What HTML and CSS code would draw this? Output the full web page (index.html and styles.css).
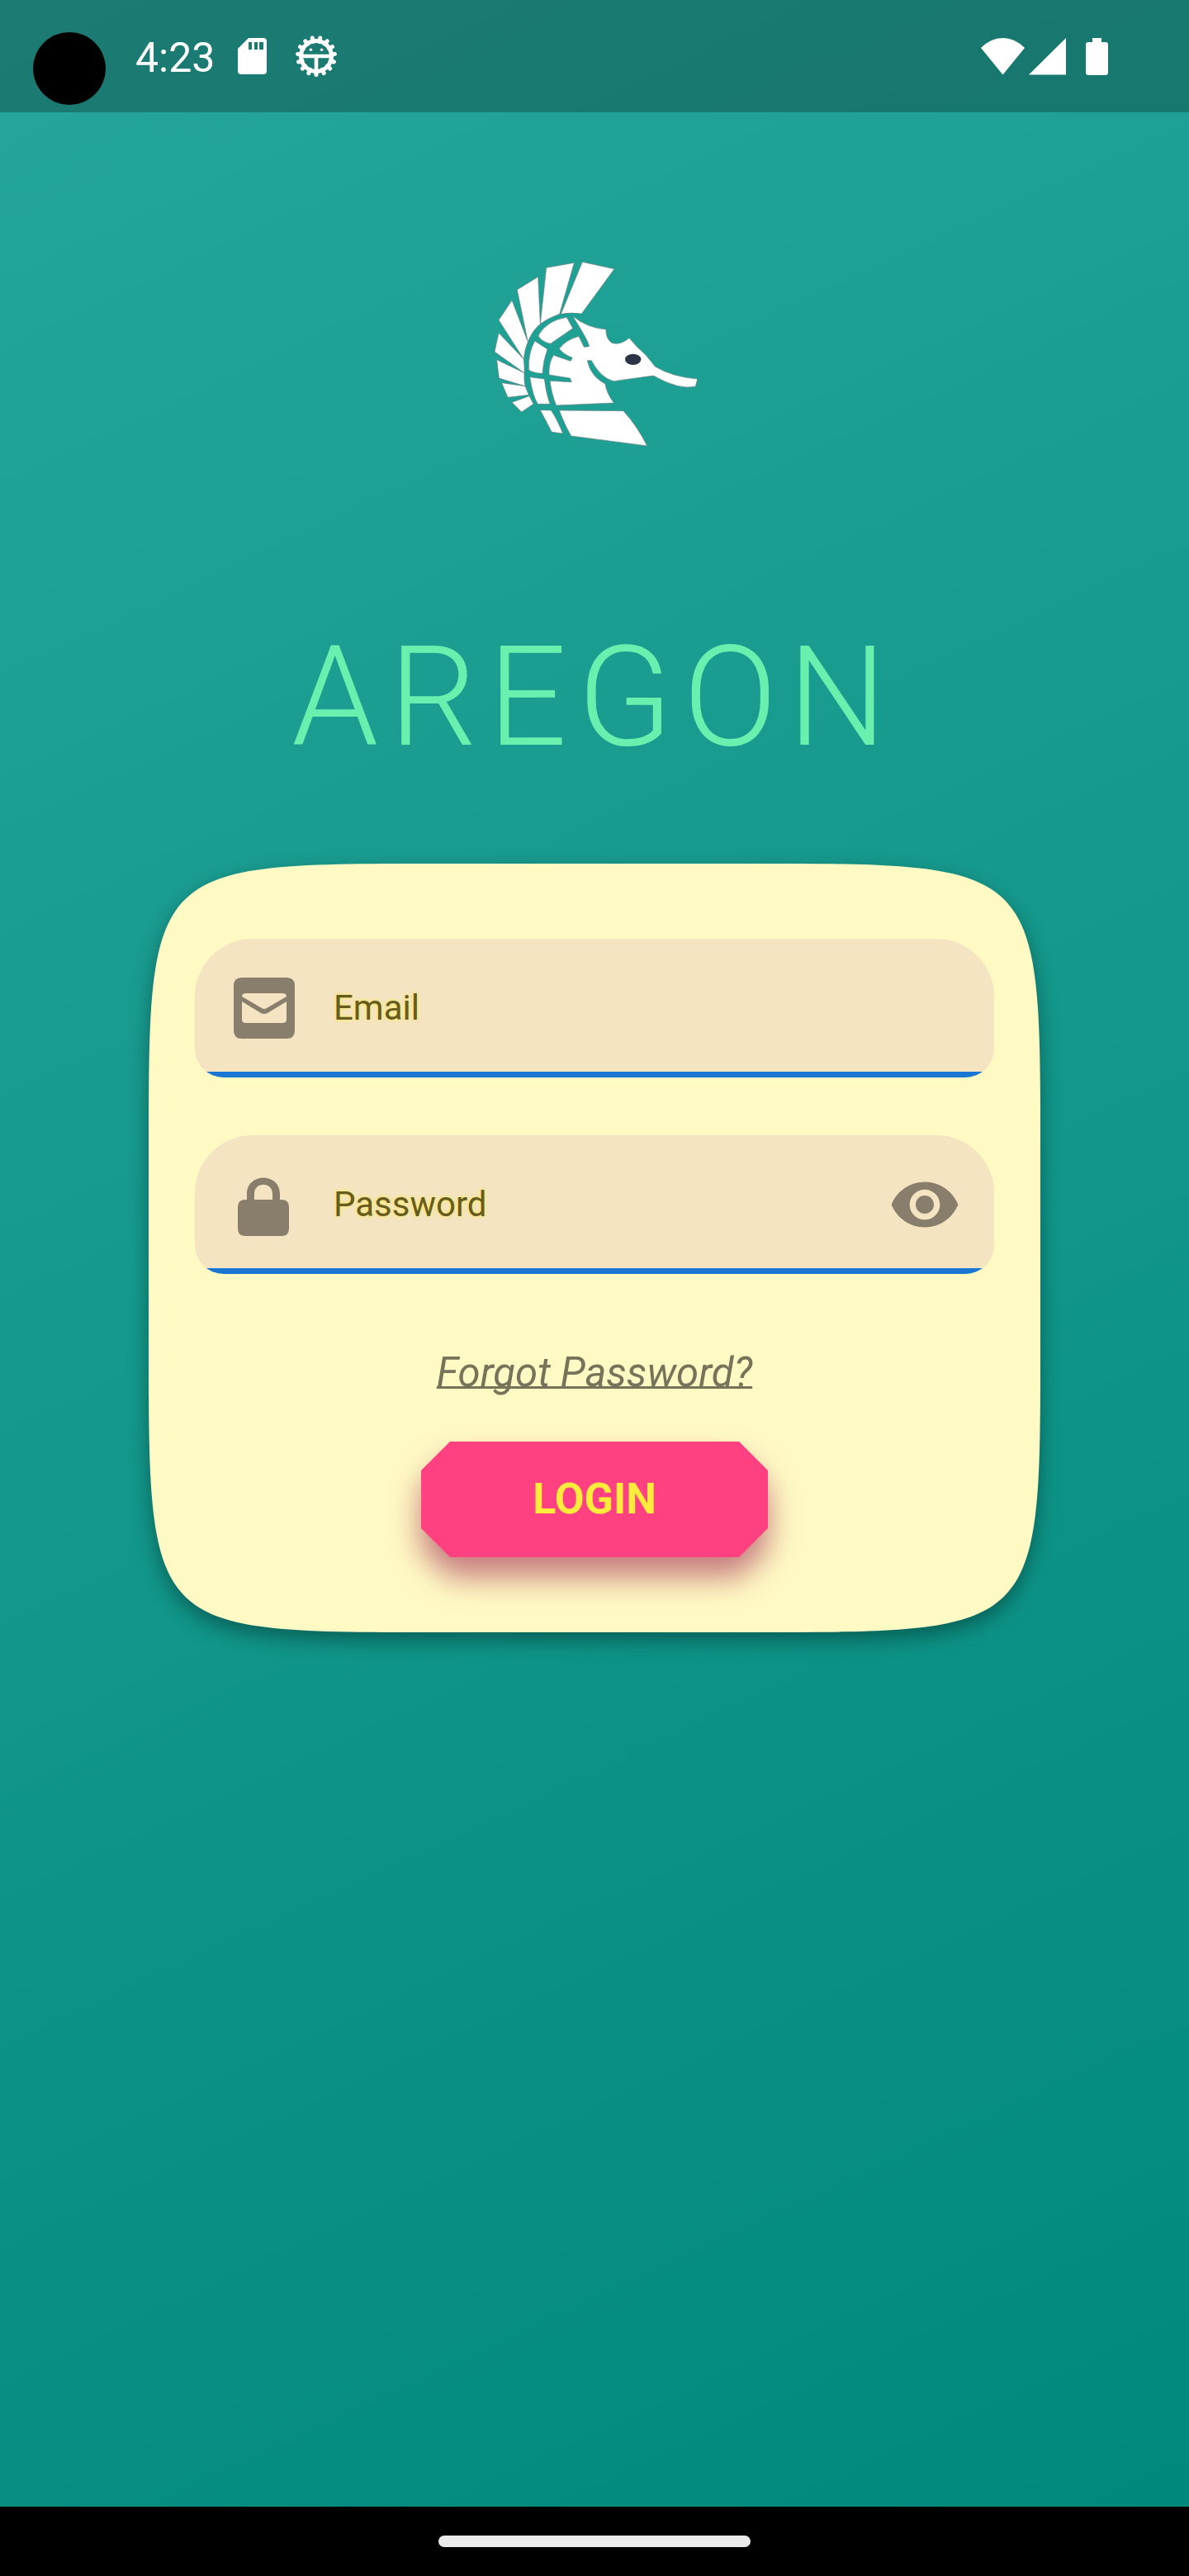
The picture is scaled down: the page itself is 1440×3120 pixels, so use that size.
FILE: index.html
```html
<!DOCTYPE html>
<html lang="en">
<head>
<meta charset="utf-8">
<meta name="viewport" content="width=device-width, initial-scale=1">
<title>Aregon</title>
<link rel="stylesheet" href="styles.css">
</head>
<body>
<div class="app">
  <header class="status">
    <span class="camera"></span>
    <span class="time">4:23</span>
    <svg class="sd" viewBox="0 0 35 45" aria-hidden="true"><path fill-rule="evenodd" d="M13 0H31Q35 0 35 4V40Q35 44 31 44H4Q0 44 0 40V13ZM13 5V14H17V5ZM20 5V14H24V5ZM26 5V14H31V5Z"/></svg>
    <svg class="bug" viewBox="-25 -25 50 50" aria-hidden="true">
      <circle r="18.5" class="line"/>
      <path class="line" d="M0 18V22.5M7.3 16.4L9.2 20.6M13.4 12L16.7 15.1M17.1 5.6L21.4 7M17.9-1.9L22.4-2.4M15.6-9L19.5-11.3M10.6-14.6L13.2-18.2M3.7-17.6L4.7-22M-7.3 16.4L-9.2 20.6M-13.4 12L-16.7 15.1M-17.1 5.6L-21.4 7M-17.9-1.9L-22.4-2.4M-15.6-9L-19.5-11.3M-10.6-14.6L-13.2-18.2M-3.7-17.6L-4.7-22"/>
      <path d="M-18-2.3H18V2.3H2.3V18H-2.3V2.3H-18Z"/>
      <circle cx="-6.6" cy="-7.7" r="1.8"/><circle cx="6.6" cy="-7.7" r="1.8"/>
    </svg>
    <span class="signals">
      <svg class="wifi" viewBox="0 0 53 45" aria-hidden="true"><path d="M0 12Q12 0 26.5 0T53 12L26.5 44.500Z"/></svg>
      <svg class="cell" viewBox="0 0 45 45" aria-hidden="true"><path d="M45 0V44.500H0Z"/></svg>
      <svg class="battery" viewBox="0 0 27 45" aria-hidden="true"><path d="M8 0H19V5H24Q27 5 27 8V42Q27 45 24 45H3Q0 45 0 42V8Q0 5 3 5H8Z"/></svg>
    </span>
  </header>
  <main class="screen">
    <svg class="logo" viewBox="-15 0 810 750" role="img" aria-label="Aregon logo">
      <g class="plates">
        <path d="M346 52L462 77L343 240Q305 234 268 241Z"/>
        <path d="M215 73L316 55L263 241Q222 256 193 277Z"/>
        <path d="M109 153L185 106L193 277Q165 300 148 342Z"/>
        <path d="M42 263L90 191L148 342Q136 370 133 405Z"/>
        <path d="M42 310L133 405Q136 430 135 455L27 378Z"/>
        <path d="M35 407L135 455Q133 480 138 503L43 474Z"/>
        <path d="M53 491L138 503L151 535L75 544Z"/>
        <path d="M90 562L153 539L168 568L125 597Z"/>
        <path d="M187 317Q219 264 289 253L311 293L230 349Q200 342 187 323Z"/>
        <path d="M173 339L219 369Q204 409 201 457Q168 456 151 444Q148 385 173 339Z"/>
        <path d="M155 470L208 477Q213 525 228 568H184Q166 540 155 470Z"/>
        <path d="M193 590L232 591Q251 617 275 675L235 670Z"/>
        <path d="M262 591L495 593Q545 648 581 720L305 684Q282 645 262 591Z"/>
        <path d="M311 249Q364 292 432 297Q430 330 453 346Q485 356 516 328Q542 361 574 388Q596 413 610 432Q675 470 764 477L757 504Q700 519 604 465L460 485Q412 473 379 410H364Q375 466 429 495Q432 525 460 564L251 573Q235 535 228 484L307 488L301 474L225 462Q223 419 241 391L303 412L310 400Q275 387 262 367Q285 335 333 322L352 361L370 359Q372 345 311 249Z"/>
      </g>
      <ellipse class="eye-dot" cx="530" cy="406" rx="29" ry="20"/>
    </svg>
    <h1 class="title">AREGON</h1>
    <form class="card">
      <svg class="card-shape" viewBox="0 0 1080 931" preserveAspectRatio="none" aria-hidden="true"><path d="M0 350C0 0 0 0 350 0H730C1080 0 1080 0 1080 350V581C1080 931 1080 931 730 931H350C0 931 0 931 0 581Z"/></svg>
      <div class="card-body">
        <label class="field">
          <svg class="icon" viewBox="0 0 88 88" aria-hidden="true"><path fill-rule="evenodd" d="M17 7H71Q81 7 81 17V71Q81 81 71 81H17Q7 81 7 71V17Q7 7 17 7ZM22 26Q17 26 17 30L41 44Q44 46 47 44L71 30Q71 26 66 26ZM17 36V58Q17 62 22 62H66Q71 62 71 58V36L48 50Q44 52 40 50Z"/></svg>
          <input type="email" placeholder="Email" aria-label="Email">
        </label>
        <div class="field">
          <svg class="icon" viewBox="0 0 88 88" aria-hidden="true"><path fill-rule="evenodd" d="M23 38V31C23 5 63 5 63 31V38H65Q74 38 74 47V73Q74 82 65 82H21Q12 82 12 73V47Q12 38 21 38ZM32 38H54V31C54 16 32 16 32 31Z"/></svg>
          <input type="password" placeholder="Password" aria-label="Password">
          <button class="reveal" type="button" aria-label="Show password"><svg class="icon" viewBox="0 0 24 24" aria-hidden="true"><path d="M12 4.500C7 4.500 2.730 7.610 1 12c1.730 4.390 6 7.500 11 7.500s9.270-3.110 11-7.500c-1.730-4.390-6-7.500-11-7.500zM12 17c-2.760 0-5-2.240-5-5s2.240-5 5-5 5 2.240 5 5-2.240 5-5 5zm0-8c-1.660 0-3 1.340-3 3s1.340 3 3 3 3-1.340 3-3-1.340-3-3-3z"/></svg></button>
        </div>
        <a class="forgot" href="#forgot">Forgot Password?</a>
        <div class="login-shadow"><button class="login" type="submit">LOGIN</button></div>
      </div>
    </form>
  </main>
</div>
<footer class="nav"><span class="pill"></span></footer>
</body>
</html>
```
FILE: styles.css
```css
* { box-sizing: border-box; }

body {
  margin: 0;
  min-height: 100vh;
  display: flex;
  flex-direction: column;
  font-family: Roboto, "Liberation Sans", sans-serif;
}

.app {
  flex: 1;
  display: flex;
  flex-direction: column;
  background: linear-gradient(155deg, #26a69a, #00897b);
}

/* System status bar */
.status {
  display: flex;
  align-items: center;
  height: 136px;
  padding: 0 98px 0 40px;
  background: rgba(0, 0, 0, 0.25);
  color: #fff;
  fill: #fff;
}

.camera {
  width: 88px;
  height: 88px;
  margin: 30px 36px 0 0;
  border-radius: 50%;
  background: #000;
}

.time {
  padding-top: 4px;
  margin-right: 28px;
  font-size: 50px;
  line-height: 56px;
}

.sd { width: 35px; height: 45px; margin-right: 35px; }
.bug { width: 50px; height: 50px; }
.line { fill: none; stroke: #fff; stroke-width: 5px; stroke-linecap: round; }

.signals { display: flex; margin-left: auto; }
.wifi { width: 53px; height: 45px; margin-right: 5px; }
.cell { width: 45px; height: 45px; margin-right: 24px; }
.battery { width: 27px; height: 45px; }

/* Login screen */
.screen {
  display: flex;
  flex-direction: column;
  align-items: center;
  padding: 164px 0;
}

.logo { width: 270px; height: 250px; }
.plates { fill: #fff; stroke: #6f7f83; stroke-width: 2px; }
.eye-dot { fill: #2c3547; }

.title {
  margin: 197px 0 103px;
  font-size: 168px;
  font-weight: 300;
  line-height: 196px;
  letter-spacing: 13px;
  color: #69f0ae;
}

.card {
  display: grid;
  width: 75%;
}

.card-shape,
.card-body { grid-area: 1 / 1; min-width: 0; }

.card-shape {
  width: 100%;
  height: 100%;
  min-height: 0;
  overflow: visible;
  fill: #fff9c4;
  filter: drop-shadow(0 10px 12px rgba(0, 0, 0, 0.35));
}

.card-body {
  position: relative;
  display: flex;
  flex-direction: column;
  align-items: center;
  padding: 91px 56px 90px;
}

.field {
  display: flex;
  align-items: center;
  gap: 40px;
  width: 100%;
  height: 168px;
  margin-bottom: 70px;
  padding: 0 40px;
  border-radius: 70px 70px 35px 35px;
  background: linear-gradient(#1976d2, #1976d2) bottom / 100% 7px no-repeat #f4e4c1;
}

.icon { display: block; flex: none; width: 88px; height: 88px; fill: #887e6b; }

.field input {
  flex: 1;
  min-width: 0;
  padding: 0;
  border: 0;
  outline: 0;
  background: none;
  font: 42px/56px Roboto, "Liberation Sans", sans-serif;
  color: #665c22;
}

.field input::placeholder {
  color: #665c22;
  opacity: 1;
  text-shadow: 0 0 4px #ffeb3b;
}

.reveal { padding: 0; border: 0; background: none; }

.forgot {
  margin: 20px 0 53px;
  font-size: 49px;
  font-style: italic;
  line-height: 60px;
  color: #757359;
  text-decoration: underline;
  text-decoration-thickness: 3px;
  text-decoration-skip-ink: none;
  text-underline-offset: 0;
}

.login-shadow {
  filter: drop-shadow(0 24px 18px rgba(160, 40, 80, 0.6));
}

.login {
  display: block;
  width: 420px;
  height: 140px;
  padding: 0;
  border: 0;
  background: #ff4081;
  clip-path: polygon(35px 0, calc(100% - 35px) 0, 100% 35px, 100% calc(100% - 35px), calc(100% - 35px) 100%, 35px 100%, 0 calc(100% - 35px), 0 35px);
  font: 700 52px/60px Roboto, "Liberation Sans", sans-serif;
  color: #ffeb3b;
}

/* System navigation bar */
.nav {
  display: flex;
  justify-content: center;
  align-items: center;
  height: 84px;
  background: #000;
}

.pill { width: 378px; height: 14px; border-radius: 7px; background: #ebebeb; }
```
